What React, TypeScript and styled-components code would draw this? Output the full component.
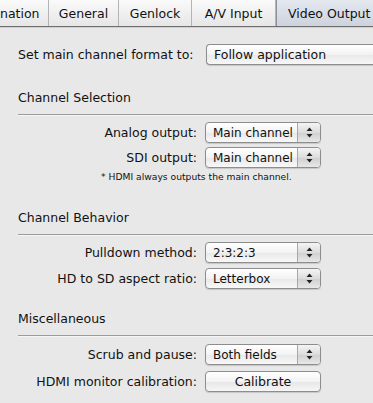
import React from 'react';
import styled, { createGlobalStyle } from 'styled-components';

const GlobalStyle = createGlobalStyle`
  html, body {
    margin: 0;
    padding: 0;
    background: #e8e8e8;
  }
  body {
    font-family: "DejaVu Sans", "Lucida Grande", sans-serif;
    font-size: 12.5px;
    color: #111;
    width: 373px;
    height: 403px;
    overflow: hidden;
  }
`;

const tabs = [
  { label: 'nation', width: 49, first: true },
  { label: 'General', width: 70 },
  { label: 'Genlock', width: 73 },
  { label: 'A/V Input', width: 84 },
  { label: 'Video Output', width: 97, selected: true },
];

const App: React.FC = () => {
  return (
    <>
      <GlobalStyle />
      <Window>
        <TabBar>
          {tabs.map((t) => (
            <Tab key={t.label} $width={t.width} $selected={!!t.selected} $first={!!t.first}>
              {t.label}
            </Tab>
          ))}
        </TabBar>
        <Content>
          <TopRow>
            <TopLabel>Set main channel format to:</TopLabel>
            <WideSelect>Follow application</WideSelect>
          </TopRow>

          <SectionHeader $top={25}>Channel Selection</SectionHeader>
          <Divider />
          <FormRows $gap={4}>
            <FormRow>
              <Label>Analog output:</Label>
              <PopUp>
                <PopUpText>Main channel</PopUpText>
                <Stepper><Arrows /></Stepper>
              </PopUp>
            </FormRow>
            <FormRow>
              <Label>SDI output:</Label>
              <PopUp>
                <PopUpText>Main channel</PopUpText>
                <Stepper><Arrows /></Stepper>
              </PopUp>
            </FormRow>
          </FormRows>
          <Note>* HDMI always outputs the main channel.</Note>

          <SectionHeader $top={26}>Channel Behavior</SectionHeader>
          <Divider />
          <FormRows $gap={5}>
            <FormRow>
              <Label>Pulldown method:</Label>
              <PopUp>
                <PopUpText>2:3:2:3</PopUpText>
                <Stepper><Arrows /></Stepper>
              </PopUp>
            </FormRow>
            <FormRow>
              <Label>HD to SD aspect ratio:</Label>
              <PopUp>
                <PopUpText>Letterbox</PopUpText>
                <Stepper><Arrows /></Stepper>
              </PopUp>
            </FormRow>
          </FormRows>

          <SectionHeader $top={22}>Miscellaneous</SectionHeader>
          <Divider />
          <FormRows $gap={6} $top={8}>
            <FormRow>
              <Label>Scrub and pause:</Label>
              <PopUp>
                <PopUpText>Both fields</PopUpText>
                <Stepper><Arrows /></Stepper>
              </PopUp>
            </FormRow>
            <FormRow>
              <Label>HDMI monitor calibration:</Label>
              <PushButton>Calibrate</PushButton>
            </FormRow>
          </FormRows>
        </Content>
      </Window>
    </>
  );
};

const Arrows: React.FC = () => (
  <svg width="7" height="11" viewBox="0 0 7 11">
    <path d="M3.5 0.5 L6.5 4 L0.5 4 Z" fill="#222" />
    <path d="M3.5 10.5 L6.5 7 L0.5 7 Z" fill="#222" />
  </svg>
);

const Window = styled.div`
  width: 373px;
  height: 403px;
  display: flex;
  flex-direction: column;
`;

const TabBar = styled.div`
  display: flex;
  height: 26px;
  border-bottom: 1px solid #6e6e6e;
  background: linear-gradient(#fafafa, #e6e6e6);
  box-shadow: 0 1px 0 #d0d0d0;
`;

const Tab = styled.div<{ $width: number; $selected: boolean; $first: boolean }>`
  flex: 0 0 ${(p) => p.$width}px;
  box-sizing: border-box;
  display: flex;
  align-items: center;
  justify-content: ${(p) => (p.$first ? 'flex-start' : 'center')};
  font-size: 12.5px;
  color: #111;
  border-right: 1px solid #b4b4b4;
  background: ${(p) => (p.$selected ? 'linear-gradient(#e4e8ef, #cdd3dd)' : 'transparent')};
  border-left: ${(p) => (p.$selected ? '1px solid #8c909a' : 'none')};
  white-space: nowrap;
  overflow: visible;
  &:last-child {
    border-right: none;
    flex: 1 0 auto;
    justify-content: flex-start;
    padding-left: 11px;
  }
`;

const Content = styled.div`
  padding-left: 18px;
  display: flex;
  flex-direction: column;
`;

const TopRow = styled.div`
  display: flex;
  align-items: center;
  margin-top: 17px;
  height: 21px;
`;

const TopLabel = styled.div`
  font-size: 12.5px;
  width: 188px;
  white-space: nowrap;
`;

const WideSelect = styled.div`
  flex: 1;
  height: 21px;
  box-sizing: border-box;
  border: 1px solid #8d8d8d;
  border-right: none;
  border-radius: 4px 0 0 4px;
  background: linear-gradient(#ffffff, #f2f2f2 50%, #e9e9e9 51%, #f7f7f7);
  display: flex;
  align-items: center;
  padding-left: 7px;
  font-size: 12.5px;
  box-shadow: 0 1px 1px rgba(0, 0, 0, 0.15);
  white-space: nowrap;
`;

const SectionHeader = styled.div<{ $top: number }>`
  font-size: 12.5px;
  margin-top: ${(p) => p.$top}px;
  height: 16px;
  line-height: 16px;
`;

const Divider = styled.div`
  height: 1px;
  background: #9c9c9c;
  margin-top: 8px;
  box-shadow: 0 1px 0 #f6f6f6;
`;

const FormRows = styled.div<{ $gap: number; $top?: number }>`
  display: flex;
  flex-direction: column;
  gap: ${(p) => p.$gap}px;
  margin-top: ${(p) => p.$top ?? 7}px;
`;

const FormRow = styled.div`
  display: grid;
  grid-template-columns: 179px 116px;
  column-gap: 8px;
  align-items: center;
  height: 21px;
`;

const Label = styled.div`
  text-align: right;
  font-size: 12.5px;
  white-space: nowrap;
`;

const PopUp = styled.div`
  height: 21px;
  box-sizing: border-box;
  border: 1px solid #8d8d8d;
  border-radius: 4px;
  background: linear-gradient(#ffffff, #f3f3f3 50%, #e8e8e8 51%, #f8f8f8);
  box-shadow: 0 1px 1px rgba(0, 0, 0, 0.15);
  display: flex;
  align-items: stretch;
  overflow: hidden;
`;

const PopUpText = styled.div`
  flex: 1;
  display: flex;
  align-items: center;
  padding-left: 7px;
  font-size: 12px;
  white-space: nowrap;
  overflow: hidden;
`;

const Stepper = styled.div`
  flex: 0 0 22px;
  border-left: 1px solid #a8a8a8;
  background: linear-gradient(#f4f4f4, #dcdcdc 50%, #cfcfcf 51%, #e8e8e8);
  display: flex;
  align-items: center;
  justify-content: center;
`;

const PushButton = styled.div`
  height: 21px;
  box-sizing: border-box;
  border: 1px solid #8d8d8d;
  border-radius: 4px;
  background: linear-gradient(#ffffff, #f3f3f3 50%, #e6e6e6 51%, #f6f6f6);
  box-shadow: 0 1px 1px rgba(0, 0, 0, 0.15);
  display: flex;
  align-items: center;
  justify-content: center;
  font-size: 12.5px;
`;

const Note = styled.div`
  font-size: 9.2px;
  margin-top: 2px;
  padding-left: 83px;
  height: 14px;
  line-height: 14px;
`;

export default App;
